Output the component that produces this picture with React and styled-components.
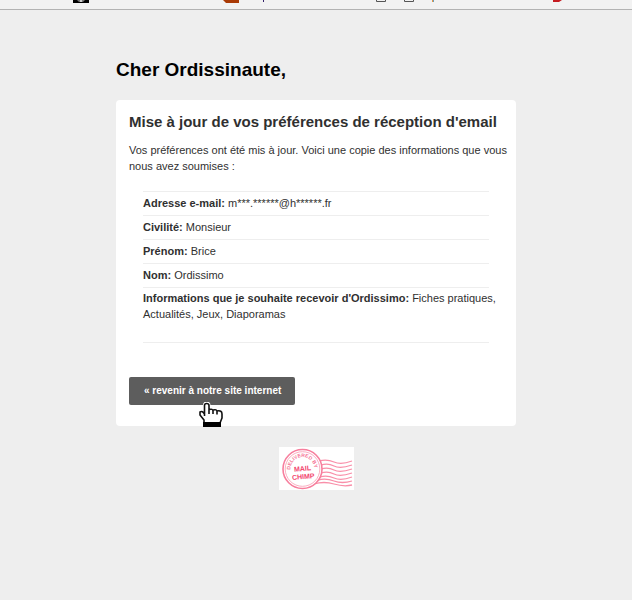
import styled, { createGlobalStyle } from 'styled-components';

const GlobalStyle = createGlobalStyle`
  body {
    margin: 0;
    background: #eeeeee;
    color: #303030;
    font-family: "Liberation Sans", Arial, Helvetica, sans-serif;
    font-size: 11px;
    line-height: 16px;
  }
`;

const BookmarksBar = styled.div`
  display: flex;
  align-items: flex-start;
  height: 9px;
  overflow: hidden;
  background: #f2f2f2;
  border-bottom: 1px solid #b3b3b3;
`;

const Favicon = styled.svg`
  flex: none;
  display: block;
  height: 4px;
  width: ${props => props.$width}px;
  margin-left: ${props => props.$before}px;
`;

const Page = styled.main`
  box-sizing: border-box;
  width: 100%;
  max-width: 400px;
  margin: 0 auto;
  padding-top: 48px;
`;

const Greeting = styled.h1`
  margin: 0 0 18px;
  color: #000;
  font-size: 19px;
  line-height: 24px;
`;

const Card = styled.section`
  padding: 13px 4px 21px 13px;
  background: #fff;
  border-radius: 4px;
`;

const CardTitle = styled.h2`
  margin: 0 0 11px;
  font-size: 15px;
  line-height: 18px;
`;

const Intro = styled.p`
  margin: 0;
`;

const Answers = styled.ul`
  list-style: none;
  margin: 17px 23px 34px 14px;
  padding: 0;
  border-bottom: 1px solid #eeeeee;
  white-space: nowrap;
`;

const Answer = styled.li`
  padding: 3px 0 4px;
  border-top: 1px solid #eeeeee;

  &:last-child {
    padding: 2px 0 20px;
    white-space: pre;
  }
`;

const ButtonArea = styled.div`
  position: relative;
  display: inline-block;
  vertical-align: top;
`;

const BackLink = styled.a`
  display: block;
  padding: 6px 14px 6px 15px;
  background: #5d5d5d;
  border-radius: 2px;
  color: #fff;
  font-size: 10px;
  font-weight: bold;
  text-decoration: none;
`;

const Hand = styled.svg`
  position: absolute;
  top: 25px;
  left: 69px;
  width: 26px;
  height: 27px;
  pointer-events: none;
`;

const Footer = styled.footer`
  display: flex;
  justify-content: center;
  padding-top: 21px;
`;

const Stamp = styled.svg`
  display: block;
  width: 75px;
  height: 43px;
  background: #fff;
`;

const answers = [
  { label: 'Adresse e-mail:', value: 'm***.******@h******.fr' },
  { label: 'Civilité:', value: 'Monsieur' },
  { label: 'Prénom:', value: 'Brice' },
  { label: 'Nom:', value: 'Ordissimo' },
  {
    label: "Informations que je souhaite recevoir d'Ordissimo:",
    value: 'Fiches pratiques,\nActualités, Jeux, Diaporamas',
  },
];

const Bookmarks = () => (
  <BookmarksBar>
    <Favicon $width={16} $before={73}>
      <path d="M0 0h16v3H0z" fill="#000" />
      <path d="M4 0h8l-2 2H6z" fill="#777" />
      <path d="M7 0h2v2H7z" fill="#ccc" />
    </Favicon>
    <Favicon $width={16} $before={134}>
      <path d="M0 0h16v3H3z" fill="#a93a05" />
    </Favicon>
    <Favicon $width={2} $before={24}>
      <path d="M0 0h1v2H0z" fill="#33206b" />
    </Favicon>
    <Favicon $width={10} $before={111}>
      <path d="M.5 0v1.5h9V0" fill="none" stroke="#555" />
    </Favicon>
    <Favicon $width={10} $before={18}>
      <path d="M.5 0v1.5h9V0" fill="none" stroke="#555" />
    </Favicon>
    <Favicon $width={2} $before={18}>
      <path d="M0 0h1v2H0z" fill="#e69545" />
      <path d="M1 0h1v2H1z" fill="#6b9eb5" />
    </Favicon>
    <Favicon $width={10} $before={119}>
      <path d="M0 0h9L6 2H0z" fill="#c51b20" />
    </Favicon>
  </BookmarksBar>
);

const PointingHand = () => (
  <Hand viewBox="0 0 26 27" aria-hidden="true">
    <path
      d="M6.5 12V3Q6.5 1 8.7 1T11 3v4q2-1.4 4 0 2-1 4 .5 2-.5 3 .5 2.5 0 2.5 3v5l-2 5H6L4 17l-2-3v-4q2-2 4.5 2z"
      fill="#fff"
      stroke="#fff"
      strokeWidth="3"
      strokeLinejoin="round"
    />
    <path
      d="M6.5 14V3.5Q6.5 1.5 8.7 1.5T11 3.5V12M11 7.5q4-1 4 1.5v3M15 8q4-1 4 1.5v3M19 9q5-1 5 3v4l-2 5H6v-3l-4-5V10q2.500-1.500 4.500 2"
      fill="none"
      stroke="#111"
      strokeWidth="1.6"
      strokeLinejoin="round"
    />
    <path d="M5 20h18v5H5z" fill="#000" />
  </Hand>
);

const MailChimpStamp = () => (
  <Stamp viewBox="0 0 75 43" role="img" aria-label="Delivered by MailChimp">
    <g fill="none" stroke="#f98fa9" strokeWidth="1.3">
      <path d="M40 14q8-2 15 1t18-1" />
      <path d="M42 18q7-2 13 1t18-1" />
      <path d="M42 22q7-2 13 1t18-1" />
      <path d="M42 26q7-2 13 1t18-1" />
      <path d="M41 30q7-2 14 1t18-1" />
      <path d="M39 33q8-2 16 1t18 0" />
      <path d="M35 37q10-3 20 0t18 1" />
    </g>
    <circle cx="23.5" cy="22" r="19.5" fill="#fff" stroke="#f77e9d" strokeWidth="1.6" />
    <circle cx="23.5" cy="22" r="17.3" fill="none" stroke="#f99ab1" strokeWidth="0.8" />
    <path id="stamp-arc" d="M12.2 26A12 12 0 1 1 34.8 26" fill="none" />
    <g fill="#f2456f" fontFamily="Liberation Sans, sans-serif" fontWeight="bold">
      <text fontSize="5" fill="#f57495">
        <textPath href="#stamp-arc" startOffset="48%" textAnchor="middle">DELIVERED BY</textPath>
      </text>
      <g textAnchor="middle" fontSize="7" transform="rotate(-5 23.5 22)">
        <text x="23.5" y="24">MAIL</text>
        <text x="23.5" y="32">CHIMP</text>
      </g>
    </g>
  </Stamp>
);

const App = () => {
  return (
    <>
      <GlobalStyle />
      <Bookmarks />
      <Page>
        <Greeting>Cher Ordissinaute,</Greeting>
        <Card>
          <CardTitle>Mise à jour de vos préférences de réception d'email</CardTitle>
          <Intro>
            Vos préférences ont été mis à jour. Voici une copie des informations que vous nous avez soumises :
          </Intro>
          <Answers>
            {answers.map(({ label, value }) => (
              <Answer key={label}>
                <strong>{label}</strong> {value}
              </Answer>
            ))}
          </Answers>
          <ButtonArea>
            <BackLink href="#">« revenir à notre site internet</BackLink>
            <PointingHand />
          </ButtonArea>
        </Card>
        <Footer>
          <MailChimpStamp />
        </Footer>
      </Page>
    </>
  );
};

export default App;
